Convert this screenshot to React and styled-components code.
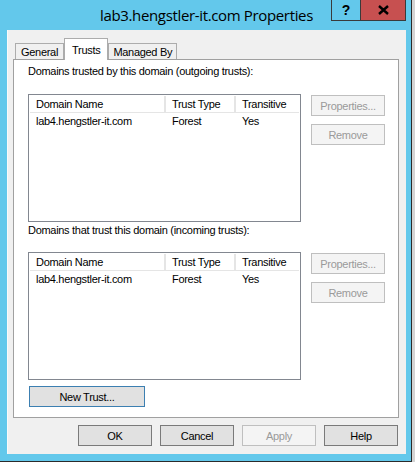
import React from "react";
import styled, { createGlobalStyle } from "styled-components";

const GlobalStyle = createGlobalStyle`
  html, body {
    margin: 0;
    padding: 0;
    background: #d4d4d4;
  }
  body {
    font-family: "Liberation Sans", Arial, sans-serif;
    font-size: 11px;
    letter-spacing: -0.3px;
    color: #000000;
  }
  * { box-sizing: border-box; }
`;

const Window = styled.div`
  width: 412px;
  height: 462px;
  background: #63c8eb;
  border-right: 1px solid #2b2b2b;
  border-bottom: 1px solid #2b2b2b;
  padding: 0 5px 7px 7px;
  display: flex;
  flex-direction: column;
`;

const TitleBar = styled.div`
  height: 30px;
  display: grid;
  grid-template-columns: 1fr auto 1fr;
  align-items: start;
`;

const Title = styled.div`
  grid-column: 2;
  font-family: "Open Sans", "Noto Sans", sans-serif;
  font-size: 15px;
  letter-spacing: -0.35px;
  line-height: 30px;
  color: #000000;
  white-space: nowrap;
`;

const Caption = styled.div`
  grid-column: 3;
  justify-self: end;
  display: flex;
  border: 1px solid #3a3a3a;
  border-top: none;
`;

const CaptionButton = styled.div`
  width: ${({ $w }) => $w}px;
  height: 20px;
  display: flex;
  align-items: center;
  justify-content: center;
  background: ${({ $bg }) => $bg};
  border-left: ${({ $sep }) => ($sep ? "1px solid #3a3a3a" : "none")};
  font-family: "Liberation Sans", Arial, sans-serif;
  font-weight: bold;
  font-size: 14px;
  letter-spacing: 0;
  color: #000000;
`;

const Client = styled.div`
  flex: 1;
  background: #f0f0f0;
  border-left: 1px solid #fafafa;
  padding: 8px 7px 8px 5px;
  display: flex;
  flex-direction: column;
`;

const TabStrip = styled.div`
  height: 22px;
  margin-bottom: -1px;
  padding-left: 2px;
  display: flex;
  align-items: flex-end;
`;

const Tab = styled.div`
  position: relative;
  z-index: ${({ $active }) => ($active ? 2 : 1)};
  height: ${({ $active }) => ($active ? 22 : 16)}px;
  margin-bottom: ${({ $active }) => ($active ? 0 : 1)}px;
  padding: 0 ${({ $pad }) => $pad}px;
  border: 1px solid #acacac;
  border-bottom: none;
  background: ${({ $active }) => ($active ? "#ffffff" : "#f0f0f0")};
  display: flex;
  align-items: center;
  line-height: 14px;
  white-space: nowrap;
`;

const Panel = styled.div`
  position: relative;
  z-index: 1;
  height: 359px;
  background: #ffffff;
  border: 1px solid #a0a0a0;
  padding: 4px 14px 10px 14px;
  display: flex;
  flex-direction: column;
`;

const Label = styled.div`
  line-height: 15px;
  height: 15px;
  margin-top: ${({ $mt }) => $mt || 0}px;
  white-space: nowrap;
`;

const Section = styled.div`
  margin-top: ${({ $mt }) => $mt}px;
  display: grid;
  grid-template-columns: 273px 74px;
  column-gap: 10px;
`;

const ListBox = styled.div`
  height: 128px;
  border: 1px solid #828790;
  padding: 1px;
  background: #ffffff;
`;

const ListRow = styled.div`
  display: grid;
  grid-template-columns: 136px 70px 1fr;
  height: 17px;
  border-bottom: ${({ $header }) => ($header ? "1px solid #e5e5e5" : "none")};
`;

const Cell = styled.div`
  padding-left: 6px;
  line-height: 16px;
  white-space: nowrap;
  border-right: ${({ $sep }) => ($sep ? "2px solid #e5e5e5" : "none")};
`;

const SideButtons = styled.div`
  padding-top: 1px;
  display: flex;
  flex-direction: column;
  gap: 8px;
`;

const Button = styled.div`
  width: ${({ $w }) => $w || 74}px;
  height: 21px;
  display: flex;
  align-items: center;
  justify-content: center;
  margin-left: ${({ $ml }) => $ml || 0}px;
  margin-top: ${({ $mt }) => $mt || 0}px;
  background: ${({ $disabled }) => ($disabled ? "#f4f4f4" : "#e1e1e1")};
  border: 1px solid
    ${({ $disabled, $default }) =>
      $disabled ? "#bfbfbf" : $default ? "#3c7fb1" : "#7a7a7a"};
  color: ${({ $disabled }) => ($disabled ? "#9a9a9a" : "#000000")};
  white-space: nowrap;
`;

const BottomRow = styled.div`
  margin-top: 7px;
  padding-right: 1px;
  display: flex;
  justify-content: flex-end;
  gap: 8px;
`;

const CloseIcon = () => (
  <svg width="11" height="10" viewBox="0 0 11 10">
    <path d="M1 1 L10 9 M10 1 L1 9" stroke="#000" strokeWidth="2.4" />
  </svg>
);

const sections = [
  { label: "Domains trusted by this domain (outgoing trusts):", top: 15, mt: 0 },
  { label: "Domains that trust this domain (incoming trusts):", top: 14, mt: 1 },
];

const TrustSection = ({ label, top, mt }) => (
  <>
    <Label $mt={mt}>{label}</Label>
    <Section $mt={top}>
      <ListBox>
        <ListRow $header>
          <Cell $sep>Domain Name</Cell>
          <Cell $sep>Trust Type</Cell>
          <Cell>Transitive</Cell>
        </ListRow>
        <ListRow>
          <Cell>lab4.hengstler-it.com</Cell>
          <Cell>Forest</Cell>
          <Cell>Yes</Cell>
        </ListRow>
      </ListBox>
      <SideButtons>
        <Button $disabled>Properties...</Button>
        <Button $disabled>Remove</Button>
      </SideButtons>
    </Section>
  </>
);

export default function App() {
  return (
    <>
      <GlobalStyle />
      <Window>
        <TitleBar>
          <Title>lab3.hengstler-it.com Properties</Title>
          <Caption>
            <CaptionButton $w={28} $bg="#63c8eb">?</CaptionButton>
            <CaptionButton $w={45} $bg="#c75050" $sep>
              <CloseIcon />
            </CaptionButton>
          </Caption>
        </TitleBar>
        <Client>
          <TabStrip>
            <Tab $pad={5}>General</Tab>
            <Tab $pad={7} $active>Trusts</Tab>
            <Tab $pad={4}>Managed By</Tab>
          </TabStrip>
          <Panel>
            {sections.map((s) => (
              <TrustSection key={s.label} {...s} />
            ))}
            <Button $w={116} $ml={1} $mt={6} $default>
              New Trust...
            </Button>
          </Panel>
          <BottomRow>
            <Button>OK</Button>
            <Button>Cancel</Button>
            <Button $disabled>Apply</Button>
            <Button>Help</Button>
          </BottomRow>
        </Client>
      </Window>
    </>
  );
}
